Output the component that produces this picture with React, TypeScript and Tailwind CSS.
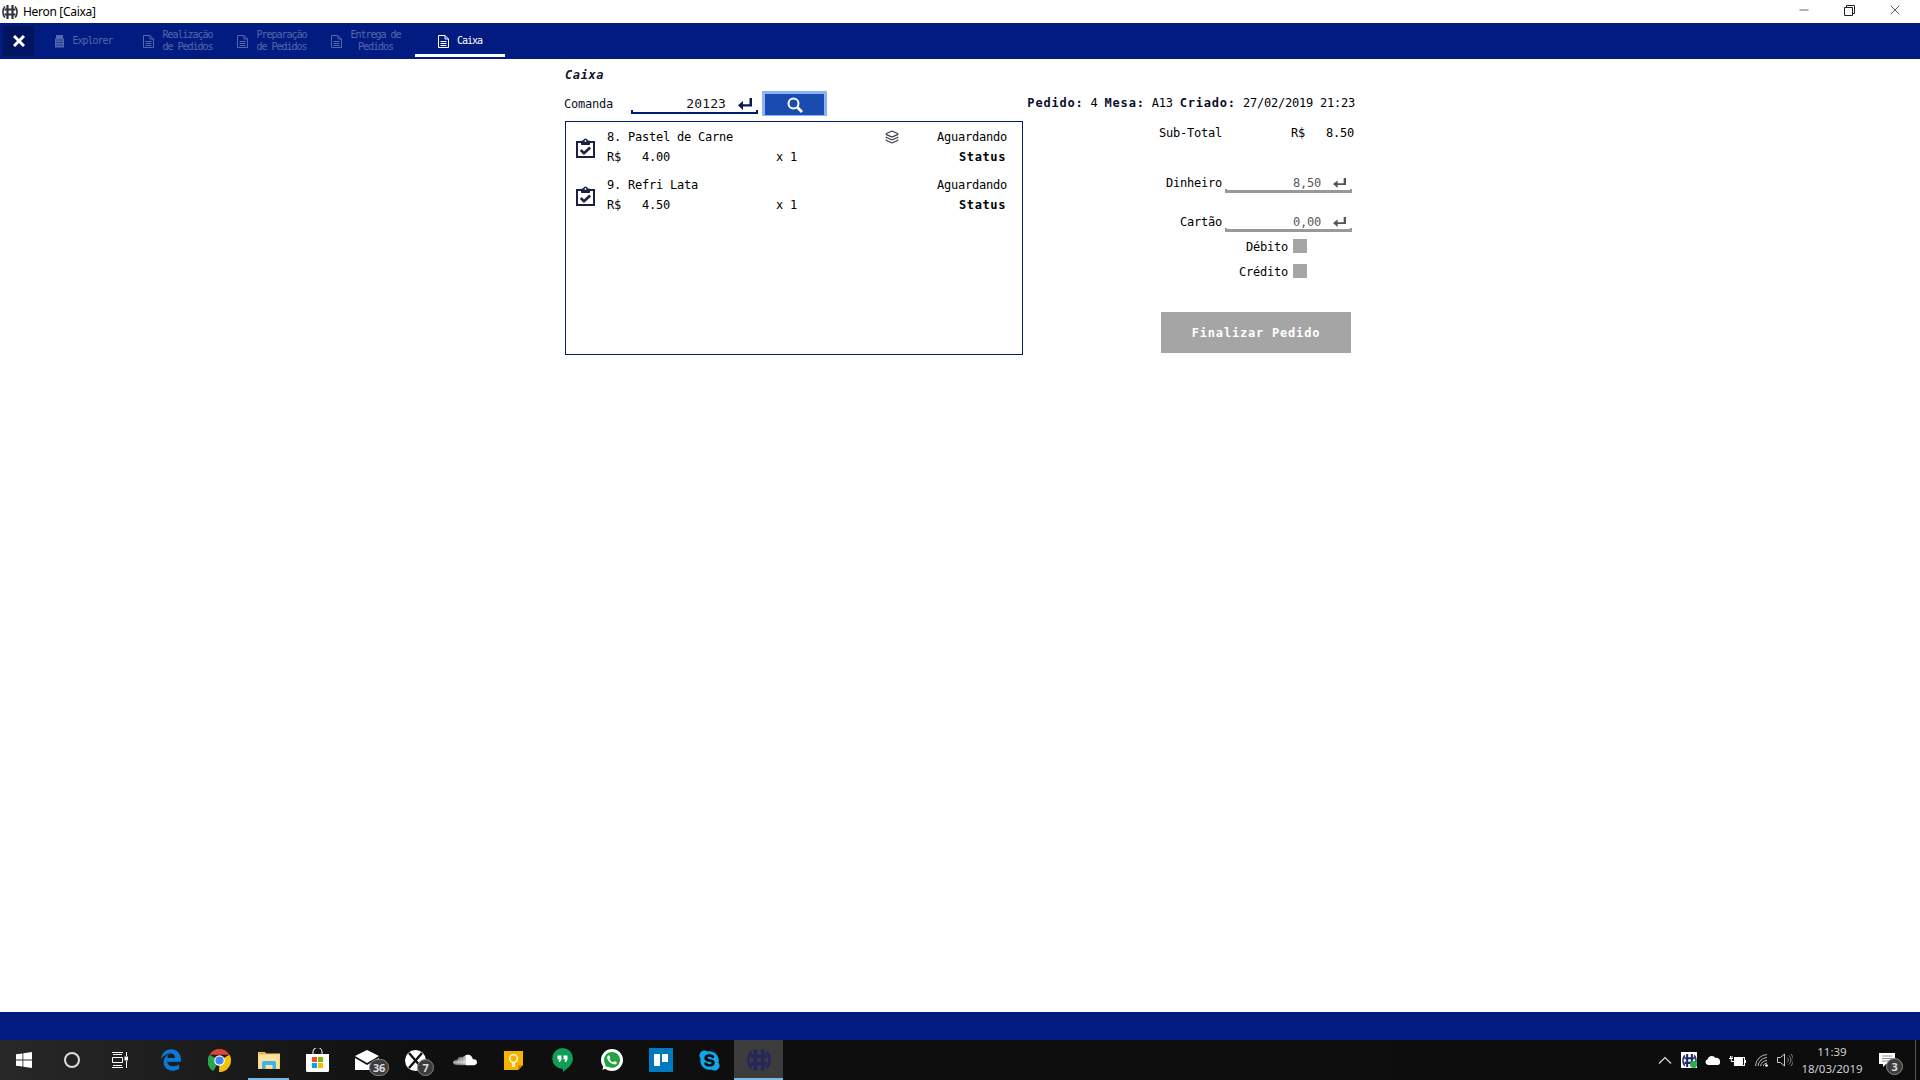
import React from "react";
import { Layers, Minus, X } from "lucide-react";
import { FaEdgeLegacy, FaSoundcloud, FaWhatsapp, FaSkype } from "react-icons/fa";

const mono = "font-['DejaVu_Sans_Mono','Liberation_Mono',monospace]";
const ui = "font-['Noto_Sans','Open_Sans',sans-serif]";

function HeronLogo({ size = 16, color = "#2f3238" }: { size?: number; color?: string }) {
  return (
    <svg width={size} height={size} viewBox="0 0 16 16" fill="none">
      <path d="M3 2.5C0.3 5 0.3 11 3 13.5M13 2.5C15.7 5 15.7 11 13 13.5" stroke={color} strokeWidth="1.6" />
      <path d="M5.5 1V15M10.5 1V15M2.5 5.5H13.5M2.5 10.5H13.5" stroke={color} strokeWidth="2.2" />
    </svg>
  );
}

function DocIcon({ color }: { color: string }) {
  return (
    <svg width="11" height="13" viewBox="0 0 11 13" fill="none" stroke={color} strokeWidth="1">
      <path d="M0.5 0.5H7L10.5 4V12.5H0.5Z" />
      <path d="M7 0.5V4H10.5M2.5 6.5H8.5M2.5 8.5H8.5M2.5 10.5H8.5" />
    </svg>
  );
}

function EnterArrow({ color, w = 14, h = 12 }: { color: string; w?: number; h?: number }) {
  return (
    <svg width={w} height={h} viewBox="0 0 14 12" fill={color} preserveAspectRatio="none" className="block">
      <path d="M11.5 0H14V8.5H5V12L0 7.2L5 3V6.2H11.5Z" />
    </svg>
  );
}

function ClipIcon() {
  return (
    <svg width="19" height="20" viewBox="0 0 19 20" fill="none" stroke="#1c2040" className="block">
      <path d="M5 4H1V19H18V4H14" strokeWidth="2" />
      <path d="M5.5 6.5V3H7.5A2 2 0 0 1 11.5 3H13.5V6.5Z" fill="#1c2040" strokeWidth="1" />
      <circle cx="9.5" cy="3" r="0.9" fill="#ffffff" stroke="none" />
      <path d="M4.8 12L8 15.3L14.2 9.5" strokeWidth="2.6" />
    </svg>
  );
}

function Tab({ label, icon, active }: { label: React.ReactNode; icon?: React.ReactNode; active?: boolean }) {
  return (
    <div className={`w-[90px] h-[34px] pt-[5px] flex items-center justify-center gap-[8px] border-b-[3px] ${active ? "border-white text-white" : "border-transparent text-[#5468ad]"}`}>
      {icon ?? <DocIcon color={active ? "#ffffff" : "#5468ad"} />}
      <div className="text-[10px] leading-[12px] text-center tracking-[-1px] whitespace-pre">{label}</div>
    </div>
  );
}

function OrderRow({ name, price }: { name: string; price: string }) {
  return (
    <div className="h-[48px] flex items-center">
      <div className="ml-[10px] mt-[4px]"><ClipIcon /></div>
      <div className="ml-[12px] pt-[2px] w-[400px] text-black">
        <div className="h-[20px] flex items-center">
          <span className="w-[278px]">{name}</span>
          {name.startsWith("8") && <Layers className="w-[14px] h-[14px] text-[#3a3d50]" strokeWidth={2} />}
          <span className="ml-auto">Aguardando</span>
        </div>
        <div className="h-[20px] flex items-center">
          <span className="w-[35px]">R$</span>
          <span className="w-[134px]">{price}</span>
          <span>x 1</span>
          <span className="ml-auto font-bold tracking-[0.6px] mr-[1px]">Status</span>
        </div>
      </div>
    </div>
  );
}

function PayField({ label, value }: { label: string; value: string }) {
  return (
    <div className="flex h-[20px]">
      <div className="w-[194px] text-right leading-[20px]">{label}</div>
      <div className="ml-[3px] w-[127px] flex flex-col">
        <div className="h-[16px] pt-[4px] flex items-center justify-end text-[#5a5a5a]">
          <span className="mr-[12px]">{value}</span>
          <span className="mr-[6px]"><EnterArrow color="#555555" w={13} h={10} /></span>
        </div>
        <div className="h-[4px] border-x-2 border-b-[3px] border-[#999999]" />
      </div>
    </div>
  );
}

function Check({ label, className }: { label: string; className: string }) {
  return (
    <div className={`flex items-center justify-end w-[279px] h-[14px] ${className}`}>
      <span className="pt-[1px]">{label}</span>
      <div className="ml-[5px] w-[14px] h-[14px] bg-[#a5a5a5]" />
    </div>
  );
}

function Cell({ children, active, running }: { children: React.ReactNode; active?: boolean; running?: boolean }) {
  return (
    <div className={`relative w-[49px] h-[40px] flex items-center justify-center ${active ? "bg-[#3c3c3c]" : ""}`}>
      {children}
      {(active || running) && <div className={`absolute bottom-0 h-[2px] bg-[#76b9ed] ${active ? "left-0 right-0" : "left-[4px] right-[4px]"}`} />}
    </div>
  );
}

function Badge({ n, className }: { n: string; className: string }) {
  return (
    <div className={`absolute w-[17px] h-[17px] rounded-full bg-[#3c3c3c] border border-[#888888] text-[#dddddd] font-bold text-[11px] leading-[15px] text-center ${ui} ${className}`}>{n}</div>
  );
}

export default function App() {
  return (
    <div className={`w-[1920px] h-[1080px] flex flex-col bg-white overflow-hidden text-[12px] tracking-[-0.22px] ${mono}`}>
      {/* Title bar */}
      <div className="h-[23px] flex items-center shrink-0">
        <div className="ml-[2px]"><HeronLogo /></div>
        <span className={`ml-[5px] text-[12px] tracking-[-0.3px] text-black ${ui}`}>Heron [Caixa]</span>
        <div className="ml-auto flex mr-[2px] self-start">
          <div className="w-[45px] h-[20px] flex items-center justify-center"><Minus className="w-[14px] h-[14px] text-[#222222]" strokeWidth={1.2} /></div>
          <div className="w-[46px] h-[20px] flex items-center justify-center">
            <svg width="11" height="11" viewBox="0 0 11 11" fill="none" stroke="#222222"><path d="M0.5 2.5H8.5V10.5H0.5ZM2.5 2.5V0.5H10.5V8.5H8.5" /></svg>
          </div>
          <div className="w-[46px] h-[20px] flex items-center justify-center"><X className="w-[16px] h-[16px] text-[#222222]" strokeWidth={1.1} /></div>
        </div>
      </div>

      {/* Nav */}
      <div className="h-[36px] bg-[#011b80] flex shrink-0">
        <div className="ml-[3px] mt-[3px] w-[31px] h-[30px] bg-[#01145f] flex items-center justify-center">
          <svg width="12" height="12" viewBox="0 0 12 12" stroke="#ffffff" strokeWidth="3"><path d="M1 1L11 11M11 1L1 11" /></svg>
        </div>
        <div className="ml-[5px] flex gap-[4px]">
          <Tab label="Explorer" icon={
            <svg width="9" height="13" viewBox="0 0 9 13" fill="#5468ad"><path d="M1 0H8V3.5H9V12.5H0V3.5H1Z" /><path d="M1 5H8M1 7.5H8M1 10H8" stroke="#011b80" strokeWidth="0.6" /></svg>
          } />
          <Tab label={"Realização\nde Pedidos"} />
          <Tab label={"Preparação\nde Pedidos"} />
          <Tab label={"Entrega de\nPedidos"} />
          <Tab label="Caixa" active />
        </div>
      </div>

      {/* Content */}
      <div className="flex-1 flex pl-[564px]">
        <div className="w-[464px] pt-[6px]">
          <div className="h-[20px] flex items-center font-bold italic tracking-[0.6px] text-[#111122] text-[12px] pl-[1px]">Caixa</div>
          <div className="mt-[6px] h-[25px] flex">
            <div className="w-[67px] h-[25px] flex items-center text-[#111122]">Comanda</div>
            <div className="w-[127px] h-[23px] flex flex-col">
              <div className="h-[19px] flex items-end justify-end">
                <span className="text-[13px] leading-[12px] tracking-[0.1px] text-[#111122] mr-[12px]">20123</span>
                <span className="mr-[6px]"><EnterArrow color="#0e1a4e" /></span>
              </div>
              <div className="h-[4px] border-x-2 border-b-2 border-[#011b6e]" />
            </div>
            <div className="ml-[4px] w-[65px] h-[25px] bg-[#1a4bb0] border-[3px] border-b-[1px] border-[#8cb4f5] flex items-center justify-center">
              <svg width="16" height="16" viewBox="0 0 16 16" fill="none" stroke="#ffffff"><circle cx="6.5" cy="6.5" r="5" strokeWidth="2" /><path d="M10.5 10.5L15 15" strokeWidth="2.8" /></svg>
            </div>
          </div>
          <div className="mt-[5px] ml-[1px] w-[458px] h-[234px] border border-[#011b6e] text-[12px]">
            <OrderRow name="8. Pastel de Carne" price="4.00" />
            <OrderRow name="9. Refri Lata" price="4.50" />
          </div>
        </div>

        <div className="w-[327px] pt-[34px] text-black">
          <div className="h-[20px] flex items-center justify-end whitespace-pre">
            <b className="tracking-[0.8px] text-[#0a0f30]">Pedido:</b>
            <span> 4 </span>
            <b className="tracking-[0.8px] text-[#0a0f30]">Mesa:</b>
            <span> A13 </span>
            <b className="tracking-[0.8px] text-[#0a0f30]">Criado:</b>
            <span> 27/02/2019 21:23</span>
          </div>
          <div className="mt-[10px] h-[20px] flex items-center whitespace-nowrap">
            <span className="w-[194px] pl-[131px]">Sub-Total</span>
            <span className="ml-[69px]">R$</span>
            <span className="ml-auto mr-[1px]">8.50</span>
          </div>
          <div className="mt-[30px]"><PayField label="Dinheiro" value="8,50" /></div>
          <div className="mt-[19px]"><PayField label="Cartão" value="0,00" /></div>
          <Check label="Débito" className="mt-[7px]" />
          <Check label="Crédito" className="mt-[11px]" />
          <div className="mt-[34px] ml-[133px] w-[190px] h-[41px] bg-[#a5a5a5] text-white font-bold tracking-[0.8px] flex items-center justify-center">Finalizar Pedido</div>
        </div>
      </div>

      {/* Bottom strip */}
      <div className="h-[28px] bg-[#011b80] shrink-0" />

      {/* Taskbar */}
      <div className={`h-[40px] shrink-0 flex text-[#cccccc] bg-linear-to-r from-[#282828] via-[#0f0f0f] via-[22%] to-[#0c0c0c] ${ui}`}>
        <div className="w-[48px] flex items-center justify-center">
          <svg width="16" height="16" viewBox="0 0 16 16" fill="#ffffff"><path d="M0 2.3L6.5 1.4V7.6H0ZM7.3 1.3L16 0V7.6H7.3ZM0 8.4H6.5V14.6L0 13.7ZM7.3 8.4H16V16L7.3 14.7Z" /></svg>
        </div>
        <div className="w-[48px] flex items-center justify-center">
          <div className="w-[16px] h-[16px] rounded-full border-[2px] border-[#dddddd]" />
        </div>
        <div className="w-[48px] flex items-center justify-center">
          <svg width="16" height="16" viewBox="0 0 16 16" fill="none" stroke="#ffffff"><path d="M0 0.5H11M0 15.5H11M1 2.5H10M1 13.5H10M0.5 5.5H10.5V10.5H0.5ZM14.5 0V4M14.5 9V16" /><rect x="13" y="5" width="3" height="3" fill="#ffffff" /></svg>
        </div>
        <div className="w-[2px]" />
        <Cell><FaEdgeLegacy className="w-[22px] h-[22px] text-[#0b78d7]" /></Cell>
        <Cell>
          <svg width="23" height="23" viewBox="0 0 24 24">
            <path d="M12 12L5.5 23A12 12 0 0 1 1.6 6Z" fill="#2da44e" />
            <path d="M12 0A12 12 0 0 1 22.4 6H12L1.6 6A12 12 0 0 1 12 0Z" fill="#db4437" />
            <path d="M22.4 6A12 12 0 0 1 12 24H11.5L12 12Z" fill="#f4c20d" />
            <circle cx="12" cy="12" r="5.5" fill="#ffffff" />
            <circle cx="12" cy="12" r="4.3" fill="#4285f4" />
          </svg>
        </Cell>
        <Cell running>
          <svg width="22" height="18" viewBox="0 0 22 18">
            <path d="M0 1H7L8 2.5H22V18H0Z" fill="#f6d67d" />
            <path d="M1 4H21V17H1Z" fill="#fbe29a" />
            <path d="M1 1.5H7V3H1Z" fill="#e0a92e" />
            <path d="M4 18V11.5A1.5 1.5 0 0 1 5.5 10H16.5A1.5 1.5 0 0 1 18 11.5V18H14.5V14H7.5V18Z" fill="#3eb4ea" />
          </svg>
        </Cell>
        <Cell>
          <svg width="23" height="24" viewBox="0 0 23 24">
            <path d="M7 7V4A4.5 4.5 0 0 1 16 4V7" fill="none" stroke="#dddddd" strokeWidth="1.2" />
            <path d="M0 6H23V22.5A1.5 1.5 0 0 1 21.5 24H1.5A1.5 1.5 0 0 1 0 22.5Z" fill="#ffffff" />
            <rect x="6" y="9" width="5" height="5" fill="#f25022" />
            <rect x="12" y="9" width="5" height="5" fill="#7fba00" />
            <rect x="6" y="15" width="5" height="5" fill="#00a4ef" />
            <rect x="12" y="15" width="5" height="5" fill="#ffb900" />
          </svg>
        </Cell>
        <Cell>
          <svg width="24" height="20" viewBox="0 0 24 20" fill="#ffffff"><path d="M0 6L12 0L24 6L12 13Z" /><path d="M0 8L12 15L24 8V20H0Z" /></svg>
          <Badge n="36" className="left-[27px] top-[19px] !w-[20px] !h-[17px]" />
        </Cell>
        <Cell>
          <div className="w-[21px] h-[21px] rounded-full bg-white flex items-center justify-center">
            <svg width="21" height="21" viewBox="0 0 21 21" stroke="#111111" strokeWidth="2.4"><path d="M4 3L17 18M17 3L4 18" /></svg>
          </div>
          <Badge n="7" className="left-[26px] top-[19px]" />
        </Cell>
        <Cell><FaSoundcloud className="w-[24px] h-[24px] text-white" /></Cell>
        <Cell>
          <svg width="19" height="19" viewBox="0 0 19 19">
            <path d="M0 0H19V14L14 19H0Z" fill="#f5b400" />
            <path d="M14 19V14H19Z" fill="#c98f00" />
            <circle cx="9.5" cy="7.5" r="3.8" fill="none" stroke="#ffffff" strokeWidth="1.3" />
            <path d="M8 13H11M8 15H11" stroke="#ffffff" strokeWidth="1.3" />
          </svg>
        </Cell>
        <Cell>
          <svg width="21" height="24" viewBox="0 0 21 24">
            <path d="M10.5 0A10.5 10.5 0 0 1 21 10.5C21 16.5 16 20 11 24V21A10.5 10.5 0 0 1 10.5 0Z" fill="#0f9d58" />
            <path d="M5.5 7.5H9.5V11.5L8 14H6.5L7.5 11.5H5.5ZM11.5 7.5H15.5V11.5L14 14H12.5L13.5 11.5H11.5Z" fill="#ffffff" />
          </svg>
        </Cell>
        <Cell>
          <div className="relative w-[22px] h-[22px] rounded-full bg-[#25a244] border-2 border-white flex items-center justify-center">
            <FaWhatsapp className="absolute -inset-[2px] w-[22px] h-[22px] text-white" />
          </div>
        </Cell>
        <Cell>
          <div className="w-[24px] h-[24px] bg-[#0079bf] flex gap-[2px] justify-center pt-[6px]">
            <div className="w-[6px] h-[12px] bg-white" />
            <div className="w-[6px] h-[8px] bg-white" />
          </div>
        </Cell>
        <Cell><FaSkype className="w-[23px] h-[23px] text-[#12a5e8]" /></Cell>
        <Cell active><HeronLogo size={24} color="#26265f" /></Cell>

        <div className="flex-1" />

        <div className="w-[24px] flex items-center justify-center">
          <svg width="14" height="8" viewBox="0 0 14 8" fill="none" stroke="#dddddd" strokeWidth="1.2"><path d="M1 7.5L7 1.5L13 7.5" /></svg>
        </div>
        <div className="w-[24px] flex items-center justify-center">
          <div className="relative w-[16px] h-[16px] bg-white flex items-center justify-center">
            <HeronLogo size={15} color="#1c2a66" />
            <div className="absolute right-0 bottom-0 w-[7px] h-[7px] rounded-full bg-[#22b24c]" />
          </div>
        </div>
        <div className="w-[24px] flex items-center justify-center">
          <svg width="16" height="10" viewBox="0 0 16 10" fill="#ffffff"><path d="M3 10A3 3 0 0 1 2.5 4.2A4.5 4.5 0 0 1 10.5 3A3.5 3.5 0 0 1 15 6.5A3 3 0 0 1 13 10Z" /></svg>
        </div>
        <div className="w-[24px] flex items-center justify-center">
          <svg width="17" height="11" viewBox="0 0 17 11" fill="none" stroke="#ffffff"><rect x="5.5" y="2.5" width="10" height="8" /><rect x="6.5" y="3.5" width="7" height="6" fill="#ffffff" /><path d="M16.5 5V8M0 3.5H4M1.5 1V3.5M3 1V3.5M2.2 3.5V6.5H5" /></svg>
        </div>
        <div className="w-[25px] flex items-center justify-center">
          <svg width="14" height="14" viewBox="0 0 14 14" fill="none" stroke="#bbbbbb" strokeWidth="1"><path d="M0.5 13A12 12 0 0 1 12 1.5M3 13A9.5 9.5 0 0 1 12 4.5M5.5 13A7 7 0 0 1 12 7.5M8 13A4.5 4.5 0 0 1 12 10" /><circle cx="11.5" cy="12.5" r="1.3" fill="#ffffff" stroke="none" /></svg>
        </div>
        <div className="w-[22px] flex items-center justify-center">
          <svg width="16" height="14" viewBox="0 0 16 14" fill="none" stroke="#cccccc"><path d="M0.5 4.5H3.5L7.5 1V13L3.5 9.5H0.5Z" /><path d="M10 4.5A3 3 0 0 1 10 9.5M12 2.5A6 6 0 0 1 12 11.5M14 1A8.5 8.5 0 0 1 14 13" stroke="#888888" /></svg>
        </div>
        <div className="w-[72px] flex flex-col items-center justify-center text-[#d0d0d0] text-[11.5px] leading-[17px] tracking-normal">
          <span>11:39</span>
          <span>18/03/2019</span>
        </div>
        <div className="relative w-[38px] flex items-center justify-center">
          <svg width="16" height="15" viewBox="0 0 16 15"><path d="M0 0H16V11H7L4 14V11H0Z" fill="#ffffff" /><path d="M3 3H13M3 5.5H13M3 8H10" stroke="#777777" strokeWidth="0.8" /></svg>
          <Badge n="3" className="left-[18px] top-[18px]" />
        </div>
        <div className="w-[9px]" />
        <div className="w-px bg-[#555555]" />
        <div className="w-[4px]" />
      </div>
    </div>
  );
}
